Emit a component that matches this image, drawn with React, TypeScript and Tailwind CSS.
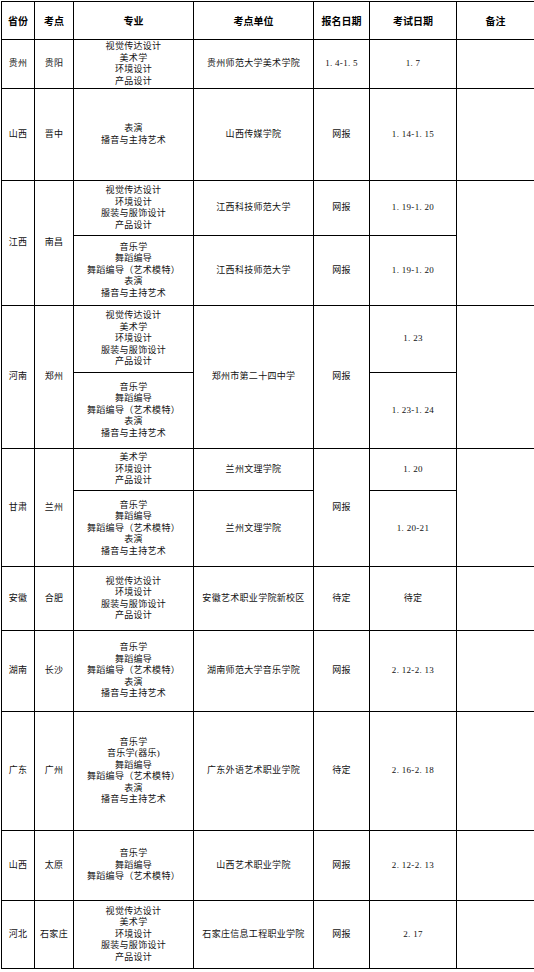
const design4 = ["视觉传达设计", "美术学", "环境设计", "产品设计"];
const design4b = ["视觉传达设计", "环境设计", "服装与服饰设计", "产品设计"];
const design5 = ["视觉传达设计", "美术学", "环境设计", "服装与服饰设计", "产品设计"];
const music5 = ["音乐学", "舞蹈编导", "舞蹈编导（艺术模特）", "表演", "播音与主持艺术"];

const Cell = ({
    children,
    className = "",
}: {
    children?: React.ReactNode;
    className?: string;
}) => (
    <div className={"bg-white flex items-center justify-center text-center " + className}>
        {children}
    </div>
);

const Lines = ({ items }: { items: string[] }) => (
    <div className="flex flex-col">
        {items.map((t, i) => (
            <span key={i}>{t}</span>
        ))}
    </div>
);

const App = () => {
    const headers = ["省份", "考点", "专业", "考点单位", "报名日期", "考试日期", "备注"];

    return (
        <div className="w-[534px] h-[972px] overflow-hidden bg-white pt-px pl-px">
            <div
                className="grid gap-px bg-black p-px w-max text-[9px] leading-[11.5px] tracking-[0.3px] text-[#111]"
                style={{ fontFamily: '"Liberation Serif", "Noto Sans CJK SC", serif' }}
            >
                <div className="grid grid-cols-[32px_38px_119px_119px_55px_86px_77px] grid-rows-[37px_48px_91px_54px_69px_66px_75px_41px_75px_63px_80px_118px_69px_67px] gap-px">
                    {headers.map((h) => (
                        <Cell
                            key={h}
                            className="font-bold text-[10px] text-black tracking-normal [font-family:'Noto_Sans_CJK_SC',sans-serif]"
                        >
                            {h}
                        </Cell>
                    ))}

                    {/* 贵州 */}
                    <Cell>贵州</Cell>
                    <Cell>贵阳</Cell>
                    <Cell>
                        <Lines items={design4} />
                    </Cell>
                    <Cell>贵州师范大学美术学院</Cell>
                    <Cell>1. 4-1. 5</Cell>
                    <Cell>1. 7</Cell>
                    <Cell />

                    {/* 山西 晋中 */}
                    <Cell>山西</Cell>
                    <Cell>晋中</Cell>
                    <Cell>
                        <Lines items={["表演", "播音与主持艺术"]} />
                    </Cell>
                    <Cell>山西传媒学院</Cell>
                    <Cell>网报</Cell>
                    <Cell>1. 14-1. 15</Cell>
                    <Cell />

                    {/* 江西 */}
                    <Cell className="row-span-2">江西</Cell>
                    <Cell className="row-span-2">南昌</Cell>
                    <Cell>
                        <Lines items={design4b} />
                    </Cell>
                    <Cell>江西科技师范大学</Cell>
                    <Cell>网报</Cell>
                    <Cell>1. 19-1. 20</Cell>
                    <Cell className="row-span-2" />
                    <Cell>
                        <Lines items={music5} />
                    </Cell>
                    <Cell>江西科技师范大学</Cell>
                    <Cell>网报</Cell>
                    <Cell>1. 19-1. 20</Cell>

                    {/* 河南 */}
                    <Cell className="row-span-2">河南</Cell>
                    <Cell className="row-span-2">郑州</Cell>
                    <Cell>
                        <Lines items={design5} />
                    </Cell>
                    <Cell className="row-span-2">郑州市第二十四中学</Cell>
                    <Cell className="row-span-2">网报</Cell>
                    <Cell>1. 23</Cell>
                    <Cell className="row-span-2" />
                    <Cell>
                        <Lines items={music5} />
                    </Cell>
                    <Cell>1. 23-1. 24</Cell>

                    {/* 甘肃 */}
                    <Cell className="row-span-2">甘肃</Cell>
                    <Cell className="row-span-2">兰州</Cell>
                    <Cell>
                        <Lines items={["美术学", "环境设计", "产品设计"]} />
                    </Cell>
                    <Cell>兰州文理学院</Cell>
                    <Cell className="row-span-2">网报</Cell>
                    <Cell>1. 20</Cell>
                    <Cell className="row-span-2" />
                    <Cell>
                        <Lines items={music5} />
                    </Cell>
                    <Cell>兰州文理学院</Cell>
                    <Cell>1. 20-21</Cell>

                    {/* 安徽 */}
                    <Cell>安徽</Cell>
                    <Cell>合肥</Cell>
                    <Cell>
                        <Lines items={design4b} />
                    </Cell>
                    <Cell>安徽艺术职业学院新校区</Cell>
                    <Cell>待定</Cell>
                    <Cell>待定</Cell>
                    <Cell />

                    {/* 湖南 */}
                    <Cell>湖南</Cell>
                    <Cell>长沙</Cell>
                    <Cell>
                        <Lines items={music5} />
                    </Cell>
                    <Cell>湖南师范大学音乐学院</Cell>
                    <Cell>网报</Cell>
                    <Cell>2. 12-2. 13</Cell>
                    <Cell />

                    {/* 广东 */}
                    <Cell>广东</Cell>
                    <Cell>广州</Cell>
                    <Cell>
                        <Lines
                            items={["音乐学", "音乐学(器乐)", "舞蹈编导", "舞蹈编导（艺术模特）", "表演", "播音与主持艺术"]}
                        />
                    </Cell>
                    <Cell>广东外语艺术职业学院</Cell>
                    <Cell>待定</Cell>
                    <Cell>2. 16-2. 18</Cell>
                    <Cell />

                    {/* 山西 太原 */}
                    <Cell>山西</Cell>
                    <Cell>太原</Cell>
                    <Cell>
                        <Lines items={["音乐学", "舞蹈编导", "舞蹈编导（艺术模特）"]} />
                    </Cell>
                    <Cell>山西艺术职业学院</Cell>
                    <Cell>网报</Cell>
                    <Cell>2. 12-2. 13</Cell>
                    <Cell />

                    {/* 河北 */}
                    <Cell>河北</Cell>
                    <Cell>石家庄</Cell>
                    <Cell>
                        <Lines items={design5} />
                    </Cell>
                    <Cell>石家庄信息工程职业学院</Cell>
                    <Cell>网报</Cell>
                    <Cell>2. 17</Cell>
                    <Cell />
                </div>
            </div>
        </div>
    );
};

export default App;
